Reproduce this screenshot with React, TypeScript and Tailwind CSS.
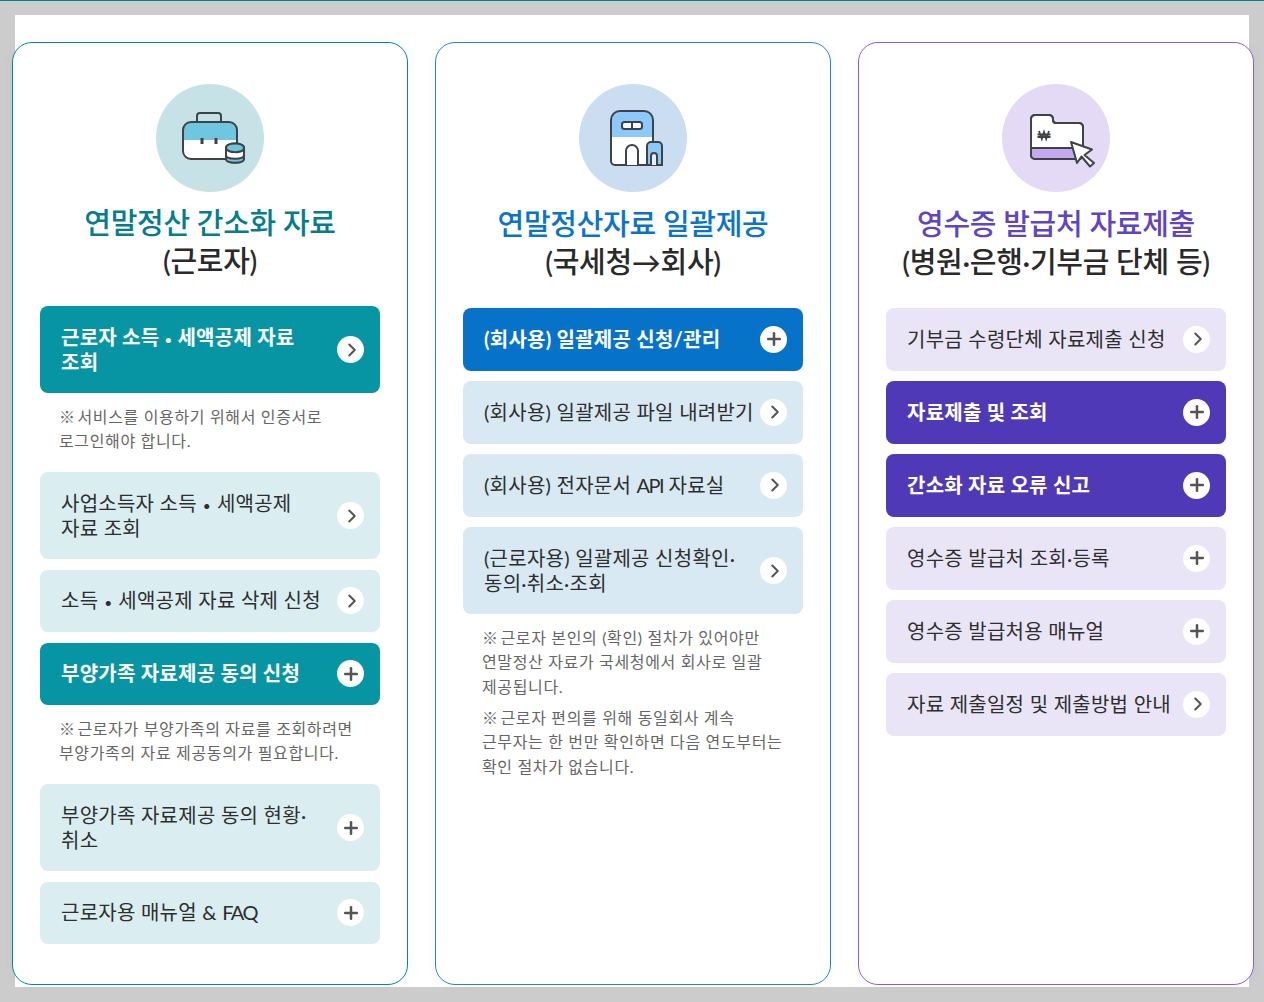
import React from 'react';
import { ChevronRight, Plus } from 'lucide-react';

type Item = { label: React.ReactNode; icon: 'arrow' | 'plus'; solid?: boolean; tall?: boolean; note?: React.ReactNode[] };

const Dot = () => <span className="font-['Inter'] text-[16px] leading-none">•</span>;
const Mark = () => <span className="tracking-[-2.300px]">※</span>;
const Latin = ({ children }: { children: React.ReactNode }) => <span className="tracking-[-1.500px]">{children}</span>;

const BriefcaseIcon = () => (
  <svg viewBox="0 0 108 108" className="h-full w-full" fill="none" stroke="#3f4346" strokeWidth="2">
    <path d="M41 38v-6a3 3 0 0 1 3-3h18a3 3 0 0 1 3 3v6" />
    <path d="M27 56V46a8 8 0 0 1 8-8h38a8 8 0 0 1 8 8v10z" fill="#6ec6e0" stroke="none" />
    <path d="M27 56h54v11a8 8 0 0 1-8 8H35a8 8 0 0 1-8-8z" fill="#fff" stroke="none" />
    <rect x="27" y="38" width="54" height="37" rx="8" />
    <path d="M46 54v6M60 54v6" strokeWidth="3" />
    <path d="M70 64c0-6 18-6 18 0v10c0 6-18 6-18 0z" fill="#fff" />
    <path d="M70 64c0-6 18-6 18 0s-18 5-18 0z" fill="#6ec6e0" />
    <path d="M70 71c0 5 18 5 18 0v4c0 5-18 5-18 0z" fill="#6ec6e0" />
  </svg>
);

const BuildingIcon = () => (
  <svg viewBox="0 0 108 108" className="h-full w-full" fill="none" stroke="#3f4346" strokeWidth="2">
    <path d="M32 53V36a9 9 0 0 1 9-9h24a9 9 0 0 1 9 9v17z" fill="#8cc8fa" stroke="none" />
    <path d="M32 53h42v28H36a4 4 0 0 1-4-4z" fill="#fff" stroke="none" />
    <path d="M74 58V36a9 9 0 0 0-9-9H41a9 9 0 0 0-9 9v41a4 4 0 0 0 4 4h32" />
    <rect x="43" y="38" width="20" height="7" rx="2.5" fill="#fff" />
    <path d="M53 38v7" />
    <path d="M47 81V67a6 6 0 0 1 12 0v14" fill="#fff" />
    <path d="M68 81V62a4 4 0 0 1 4-4h7a4 4 0 0 1 4 4v19z" fill="#8cc8fa" />
    <path d="M72 81v-9a3 3 0 0 1 6 0v9" fill="#e8eef0" />
  </svg>
);

const FolderIcon = () => (
  <svg viewBox="0 0 108 108" className="h-full w-full" fill="none" stroke="#3f4346" strokeWidth="2">
    <path d="M29 35a4 4 0 0 1 4-4h14a4 4 0 0 1 4 4v1a3 3 0 0 0 3 3h23a4 4 0 0 1 4 4v28a4 4 0 0 1-4 4H33a4 4 0 0 1-4-4z" fill="#fff" />
    <path d="M30 64h50v7a3 3 0 0 1-3 3H33a3 3 0 0 1-3-3z" fill="#c4a9f0" stroke="none" />
    <path d="M29 64h51" />
    <path d="M29 35a4 4 0 0 1 4-4h14a4 4 0 0 1 4 4v1a3 3 0 0 0 3 3h23a4 4 0 0 1 4 4v28a4 4 0 0 1-4 4H33a4 4 0 0 1-4-4z" />
    <path d="M35.500 50.500h13M35.500 53h13M37 47l2.800 8 2.200-7 2.200 7 2.800-8" strokeWidth="1.800" />
    <path d="M69 58l21 7.500-7.500 5.500L92 79l-4 3.500-8.500-10L75 79z" fill="#fff" strokeLinejoin="round" />
  </svg>
);

const columns: {
  border: string;
  titleColor: string;
  circle: string;
  solid: string;
  light: string;
  icon: React.ReactNode;
  title: string;
  sub: string;
  titleClass: string;
  listClass: string;
  items: Item[];
}[] = [
  {
    border: 'border-[#00899b]',
    titleColor: 'text-[#057d8d]',
    circle: 'bg-[#c7e2e6]',
    solid: 'bg-[#0795a3]',
    light: 'bg-[#daedf1]',
    icon: <BriefcaseIcon />,
    title: '연말정산 간소화 자료',
    sub: '(근로자)',
    titleClass: 'pt-[12px]',
    listClass: 'mt-[27px]',
    items: [
      {
        label: <>근로자 소득 <Dot /> 세액공제 자료<br />조회</>,
        icon: 'arrow',
        solid: true,
        tall: true,
        note: [<><Mark /> 서비스를 이용하기 위해서 인증서로<br />로그인해야 합니다.</>],
      },
      { label: <>사업소득자 소득 <Dot /> 세액공제<br />자료 조회</>, icon: 'arrow', tall: true },
      { label: <>소득 <Dot /> 세액공제 자료 삭제 신청</>, icon: 'arrow' },
      {
        label: '부양가족 자료제공 동의 신청',
        icon: 'plus',
        solid: true,
        note: [<><Mark /> 근로자가 부양가족의 자료를 조회하려면<br />부양가족의 자료 제공동의가 필요합니다.</>],
      },
      { label: <>부양가족 자료제공 동의 현황·<br />취소</>, icon: 'plus', tall: true },
      { label: <>근로자용 매뉴얼 & <Latin>FAQ</Latin></>, icon: 'plus' },
    ],
  },
  {
    border: 'border-[#2f7fc6]',
    titleColor: 'text-[#0b74c8]',
    circle: 'bg-[#cbddf0]',
    solid: 'bg-[#0672c8]',
    light: 'bg-[#d8e9f3]',
    icon: <BuildingIcon />,
    title: '연말정산자료 일괄제공',
    sub: '(국세청→회사)',
    titleClass: 'pt-[13px]',
    listClass: 'mt-[28px]',
    items: [
      { label: '(회사용) 일괄제공 신청/관리', icon: 'plus', solid: true },
      { label: '(회사용) 일괄제공 파일 내려받기', icon: 'arrow' },
      { label: <>(회사용) 전자문서 <Latin>API</Latin> 자료실</>, icon: 'arrow' },
      {
        label: <>(근로자용) 일괄제공 신청확인·<br />동의·취소·조회</>,
        icon: 'arrow',
        tall: true,
        note: [
          <><Mark /> 근로자 본인의 (확인) 절차가 있어야만<br />연말정산 자료가 국세청에서 회사로 일괄<br />제공됩니다.</>,
          <><Mark /> 근로자 편의를 위해 동일회사 계속<br />근무자는 한 번만 확인하면 다음 연도부터는<br />확인 절차가 없습니다.</>,
        ],
      },
    ],
  },
  {
    border: 'border-[#8a5fd6]',
    titleColor: 'text-[#5f45c2]',
    circle: 'bg-[#e4daf5]',
    solid: 'bg-[#4f39b7]',
    light: 'bg-[#e9e5f7]',
    icon: <FolderIcon />,
    title: '영수증 발급처 자료제출',
    sub: '(병원·은행·기부금 단체 등)',
    titleClass: 'pt-[13px]',
    listClass: 'mt-[28px]',
    items: [
      { label: '기부금 수령단체 자료제출 신청', icon: 'arrow' },
      { label: '자료제출 및 조회', icon: 'plus', solid: true },
      { label: '간소화 자료 오류 신고', icon: 'plus', solid: true },
      { label: '영수증 발급처 조회·등록', icon: 'plus' },
      { label: '영수증 발급처용 매뉴얼', icon: 'plus' },
      { label: '자료 제출일정 및 제출방법 안내', icon: 'arrow' },
    ],
  },
];

const App: React.FC = () => {
  return (
    <div className="h-[1002px] w-[1264px] overflow-hidden bg-[#cccccc] font-['Lato','Noto_Sans_CJK_KR',sans-serif]">
      <div className="h-px bg-[#00838f]" />
      <div className="ml-[15px] mt-[14px] h-[972px] w-[1234px] bg-white pt-[27px]">
        <div className="-ml-[3px] flex w-[1242px] gap-[27px]">
          {columns.map((col) => (
            <section
              key={col.title}
              className={`h-[943px] w-[396px] shrink-0 rounded-[20px] border bg-white px-[27px] pt-[41px] shadow-[0_0_12px_rgba(0,0,0,0.04)] ${col.border}`}
            >
              <div className={`mx-auto h-[108px] w-[108px] rounded-full ${col.circle}`}>{col.icon}</div>

              <h2 className={`whitespace-nowrap text-center text-[29px] font-medium leading-[37.500px] tracking-[-0.3px] ${col.titleClass}`}>
                <span className={`block ${col.titleColor}`}>{col.title}</span>
                <span className="block text-[#2a2a2a]">{col.sub}</span>
              </h2>

              <ul className={col.listClass}>
                {col.items.map((item, i) => (
                  <li key={i} className="mb-[10.500px]">
                    <div
                      className={`flex items-center justify-between rounded-[8px] pl-[21px] pr-[16px] ${item.tall ? 'h-[87px]' : 'h-[62.500px]'} ${item.solid ? `${col.solid} font-bold text-white` : `${col.light} text-[#2e2e2e]`}`}
                    >
                      <span className="whitespace-nowrap text-[20px] leading-[25px] tracking-[0.25px]">{item.label}</span>
                      <span className="flex h-[27px] w-[27px] shrink-0 items-center justify-center rounded-full bg-white text-[#555555]">
                        {item.icon === 'arrow' ? (
                          <ChevronRight className="ml-[2px] h-[22px] w-[22px]" strokeWidth={2.2} />
                        ) : (
                          <Plus className="h-[20px] w-[20px]" strokeWidth={3} />
                        )}
                      </span>
                    </div>
                    {item.note && (
                      <div className="flex flex-col gap-[6.500px] pb-[8px] pl-[19px] pt-[11.500px]">
                        {item.note.map((n, j) => (
                          <p key={j} className="whitespace-nowrap text-[16px] leading-[24.500px] tracking-[0.65px] text-[#666666]">
                            {n}
                          </p>
                        ))}
                      </div>
                    )}
                  </li>
                ))}
              </ul>
            </section>
          ))}
        </div>
      </div>
    </div>
  );
};

export default App;
